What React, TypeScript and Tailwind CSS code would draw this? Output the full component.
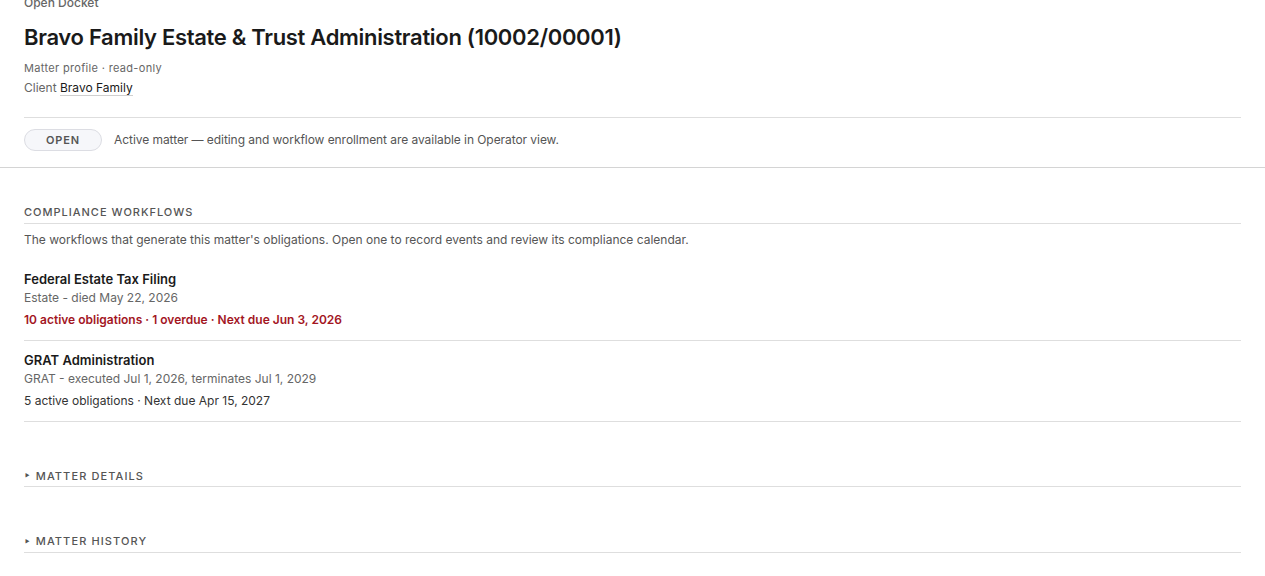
const workflows = [
  {
    name: "Federal Estate Tax Filing",
    detail: "Estate - died May 22, 2026",
    status: "10 active obligations · 1 overdue · Next due Jun 3, 2026",
    overdue: true,
  },
  {
    name: "GRAT Administration",
    detail: "GRAT - executed Jul 1, 2026, terminates Jul 1, 2029",
    status: "5 active obligations · Next due Apr 15, 2027",
    overdue: false,
  },
];

function Collapsed({ label }: { label: string }) {
  return (
    <div className="flex items-center gap-[5px] border-b border-[#dedede] pb-[2px] text-[11px] font-medium uppercase tracking-[0.1em] text-[#555]">
      <span className="pl-[1px] text-[5px] leading-none">▶</span>
      <span>{label}</span>
    </div>
  );
}

export default function App() {
  return (
    <div className="min-h-[576px] overflow-hidden bg-white font-['Inter',sans-serif] text-[#1b1b1b]">
      <div className="-mt-[5px] border-b border-[#d4d4d4] px-6 pb-[16px]">
        <div className="text-[12px] leading-4 font-medium text-[#666]">Open Docket</div>
        <h1 className="mt-[12px] text-[22px] leading-7 font-semibold tracking-[-0.014em] text-[#1a1a1a]">
          Bravo Family Estate &amp; Trust Administration (10002/00001)
        </h1>
        <div className="mt-[9px] text-[11px] leading-4 tracking-[0.03em] text-[#666]">Matter profile · read-only</div>
        <div className="mt-1 text-[12px] leading-4 text-[#666]">
          Client{" "}
          <span className="border-b border-[#cfcfcf] text-[#1a1a1a]">Bravo Family</span>
        </div>
        <div className="mt-[21px] flex items-center gap-3 border-t border-[#dedede] pt-[11px]">
          <span className="flex h-[22px] w-[78px] items-center justify-center rounded-full border border-[#dcdde3] bg-[#f6f7fa] text-[11px] font-semibold tracking-[0.08em] text-[#555]">
            OPEN
          </span>
          <span className="text-[12px] tracking-[-0.005em] text-[#555]">
            Active matter — editing and workflow enrollment are available in Operator view.
          </span>
        </div>
      </div>

      <div className="px-6 pt-[36px]">
        <div className="border-b border-[#dedede] pb-[2px] text-[11px] font-medium uppercase tracking-[0.09em] text-[#555]">
          Compliance Workflows
        </div>
        <p className="mt-[8px] text-[12px] leading-4 text-[#555]">
          The workflows that generate this matter's obligations. Open one to record events and review its compliance calendar.
        </p>
        <div className="mt-[21px]">
          {workflows.map((w, i) => (
            <div key={w.name} className={`border-b border-[#dedede] pb-[12px] ${i > 0 ? "pt-[9px]" : ""}`}>
              <div className="text-[13px] leading-5 font-semibold text-[#1a1a1a]">{w.name}</div>
              <div className="text-[12px] leading-[18px] text-[#666]">{w.detail}</div>
              <div
                className={`mt-[5px] text-[12px] leading-4 ${
                  w.overdue ? "font-semibold text-[#a3161f]" : "text-[#333]"
                }`}
              >
                {w.status}
              </div>
            </div>
          ))}
        </div>

        <div className="mt-[46px] space-y-[46px]">
          <Collapsed label="Matter details" />
          <Collapsed label="Matter history" />
        </div>
      </div>
    </div>
  );
}
